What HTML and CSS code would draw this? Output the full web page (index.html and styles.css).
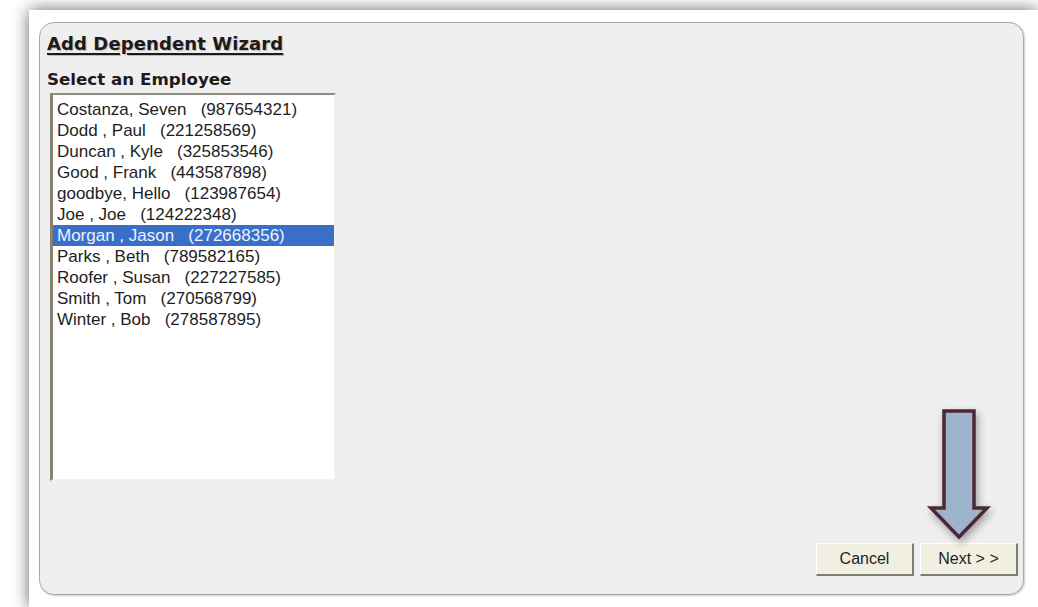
FILE: index.html
```html
<!DOCTYPE html>
<html lang="en">
<head>
<meta charset="utf-8">
<title>Add Dependent Wizard</title>
<link rel="stylesheet" href="styles.css">
</head>
<body>
<div class="frame">
  <div class="wizard">
    <h1 class="wizard-title">Add Dependent Wizard</h1>
    <div class="field-label">Select an Employee</div>
    <ul class="listbox">
      <li class="item">Costanza, Seven   (987654321)</li>
      <li class="item">Dodd , Paul   (221258569)</li>
      <li class="item">Duncan , Kyle   (325853546)</li>
      <li class="item">Good , Frank   (443587898)</li>
      <li class="item">goodbye, Hello   (123987654)</li>
      <li class="item">Joe , Joe   (124222348)</li>
      <li class="item selected">Morgan , Jason   (272668356)</li>
      <li class="item">Parks , Beth   (789582165)</li>
      <li class="item">Roofer , Susan   (227227585)</li>
      <li class="item">Smith , Tom   (270568799)</li>
      <li class="item">Winter , Bob   (278587895)</li>
    </ul>
    <div class="actions">
      <button class="btn" type="button">Cancel</button>
      <button class="btn" type="button">Next &gt; &gt;</button>
    </div>
    <svg class="callout-arrow" viewBox="0 0 70 140" width="70" height="140" aria-hidden="true">
      <path d="M19 6 H49 V103 H62 L34 132 L6 103 H19 Z" fill="#9db4cc" stroke="#4b2834" stroke-width="3.5" stroke-linejoin="miter"/>
    </svg>
  </div>
</div>
</body>
</html>
```

FILE: styles.css
```css
html, body {
  margin: 0;
  padding: 0;
  background: #ffffff;
  overflow: hidden;
  height: 100%;
}

/* white sheet; its shadow shows along the top and left edges */
.frame {
  margin: 10px 0 0 29px;
  width: calc(100vw - 29px);
  height: calc(100vh - 10px);
  background: #ffffff;
  box-shadow: 0 0 16px rgba(0, 0, 0, 0.6);
  padding: 12px 0 0 10px;
  box-sizing: border-box;
}

.wizard {
  position: relative;
  box-sizing: border-box;
  width: 985px;
  height: 573px;
  background: #efefef;
  border: 1px solid #a9a9a9;
  border-radius: 15px;
  box-shadow: 1px 1px 2px rgba(0, 0, 0, 0.2);
  padding: 10px 5px 18px 7px;
  display: flex;
  flex-direction: column;
}

.wizard-title {
  margin: 0;
  font-family: "DejaVu Sans", Verdana, sans-serif;
  font-weight: bold;
  font-size: 18px;
  line-height: 22px;
  color: #1c1a1a;
  text-decoration: underline;
  text-decoration-thickness: 2px;
  text-underline-offset: 3px;
  text-shadow: 1px 1px 1px rgba(60, 40, 20, 0.25);
  letter-spacing: 0.1px;
}

.field-label {
  margin-top: 14px;
  font-family: "DejaVu Sans", Verdana, sans-serif;
  font-weight: bold;
  font-size: 16.7px;
  line-height: 20px;
  color: #1c1a1a;
}

.listbox {
  list-style: none;
  margin: 4px 0 0 3px;
  padding: 4px 0 0 0;
  width: 286px;
  height: 388px;
  box-sizing: border-box;
  background: #ffffff;
  border-style: solid;
  border-width: 2px 2px 2px 3px;
  border-color: #8d8b7e #f2f1e4 #f2f1e4 #85836f;
  font-family: "Liberation Sans", Arial, sans-serif;
  font-size: 17px;
  line-height: 21px;
  color: #1e1e1e;
}

.item {
  padding-left: 4px;
  white-space: pre;
}

.item.selected {
  background: #3a6fc9;
  color: #eef2ff;
}

.actions {
  margin-top: auto;
  display: flex;
  justify-content: flex-end;
  gap: 6px;
}

.btn {
  width: 98px;
  height: 33px;
  box-sizing: border-box;
  background: #f0efe2;
  border-style: solid;
  border-width: 1px 2px 2px 1px;
  border-color: #ffffff #7e7d72 #7e7d72 #ffffff;
  font-family: "Liberation Sans", Arial, sans-serif;
  font-size: 16px;
  color: #1e1e1e;
  padding: 0;
}

.callout-arrow {
  position: absolute;
  left: 885px;
  top: 382px;
  filter: drop-shadow(2px 4px 4px rgba(0, 0, 0, 0.35));
}
```
